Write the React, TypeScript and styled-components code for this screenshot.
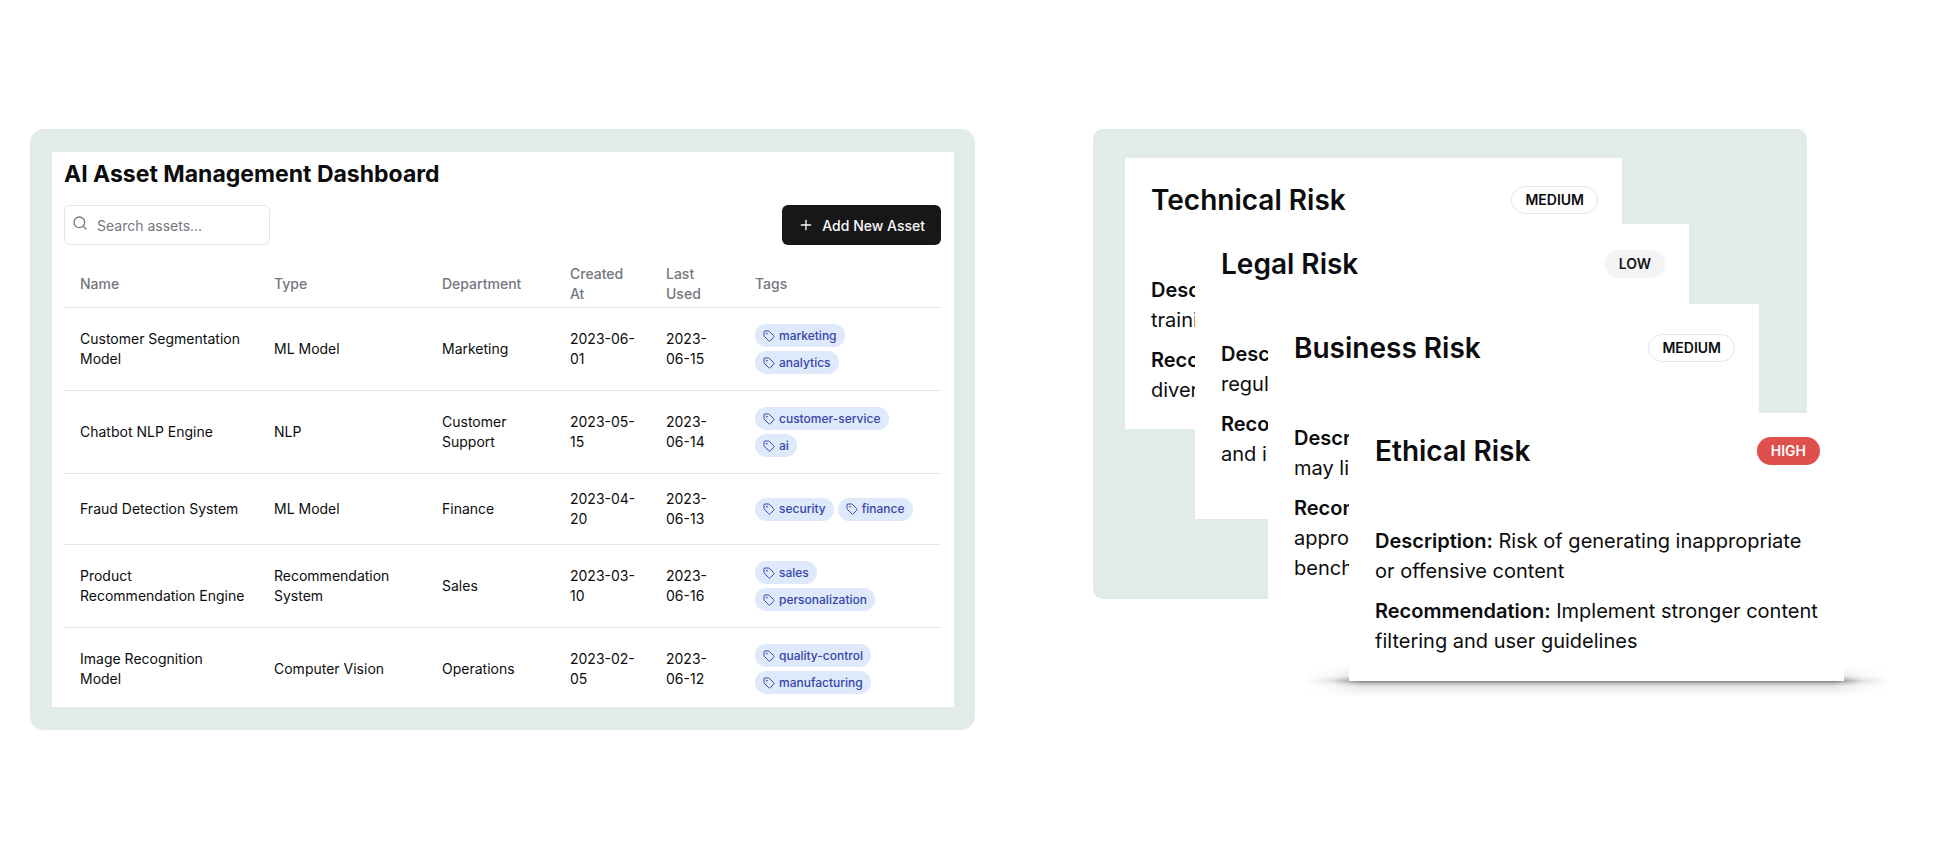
import React from "react";
import styled, { createGlobalStyle, css } from "styled-components";
import { Plus, Search, Tag as TagIcon } from "lucide-react";

const GlobalStyle = createGlobalStyle`
  *, *::before, *::after { box-sizing: border-box; }
  body {
    margin: 0;
    background: #fff;
    color: #0c0c0e;
    font-family: Inter, "Liberation Sans", sans-serif;
    overflow-x: hidden;
  }
`;

const Page = styled.main`
  display: grid;
  grid-template-columns: minmax(0, 945fr) minmax(0, 714fr);
  align-items: start;
  column-gap: 118px;
  padding: 129px 143px 129px 30px;
`;

const Panel = styled.section`
  background: #e1ebe7;
  border-radius: 14px;
  padding: 23px 21px 23px 22px;
`;

const Dashboard = styled.div`
  background: #fff;
  padding: 6px 13px 0 12px;
`;

const DashboardTitle = styled.h1`
  margin: 0 0 15px;
  font-size: 23px;
  line-height: 32px;
  font-weight: 700;
`;

const Toolbar = styled.div`
  display: flex;
  align-items: center;
  justify-content: space-between;
  margin-bottom: 15px;
`;

const SearchField = styled.label`
  position: relative;
  display: block;
  width: 206px;

  svg {
    position: absolute;
    left: 8px;
    top: 10px;
    color: #76767e;
  }
`;

const SearchInput = styled.input`
  display: block;
  width: 100%;
  height: 40px;
  padding: 0 12px 0 32px;
  border: 1px solid #e6e6e9;
  border-radius: 6px;
  background: transparent;
  font: inherit;
  font-size: 14px;

  &::placeholder {
    color: #76767e;
    opacity: 1;
  }
`;

const AddButton = styled.button`
  display: flex;
  align-items: center;
  gap: 8px;
  height: 40px;
  padding: 0 16px;
  border: 0;
  border-radius: 6px;
  background: #17171a;
  color: #fafafa;
  font: inherit;
  font-size: 14px;
  font-weight: 500;
`;

const AssetTable = styled.table`
  width: 100%;
  table-layout: fixed;
  border-collapse: separate;
  border-spacing: 0;
  font-size: 14px;
  line-height: 20px;
  text-align: left;
`;

const HeadCell = styled.th`
  height: 48px;
  padding: 0 12px 0 16px;
  border-bottom: 1px solid #e6e6e8;
  color: #76767e;
  font-weight: 500;
`;

const Row = styled.tr`
  &:last-child td {
    border-bottom: 0;
    padding-bottom: 12px;
  }
`;

const Cell = styled.td`
  padding: 15px 12px 15px 16px;
  border-bottom: 1px solid #e6e6e8;
`;

const TagList = styled.div`
  display: flex;
  flex-wrap: wrap;
  gap: 4px;
  padding: 1px 0;
`;

const Tag = styled.span`
  display: inline-flex;
  align-items: center;
  gap: 4px;
  height: 23px;
  padding: 0 8px;
  border-radius: 12px;
  background: #dfe9fc;
  color: #3646a8;
  font-size: 12px;
  font-weight: 500;
`;

const RiskPanel = styled.section`
  position: relative;
  min-height: 470px;
  border-radius: 10px;
  background: #e1ebe7;
`;

const RiskSheet = styled.article<{ $left: number; $right: number; $top: number; $height: number; $inset: number }>`
  position: absolute;
  left: ${(p) => p.$left}px;
  right: ${(p) => p.$right}px;
  top: ${(p) => p.$top}px;
  min-height: ${(p) => p.$height}px;
  padding: ${(p) => p.$inset}px 24px 24px 26px;
  background: #fff;
`;

const SheetShadow = styled.div`
  position: absolute;
  left: 212px;
  right: -83px;
  top: 536px;
  height: 32px;
  background: linear-gradient(
    rgba(0, 0, 0, 0),
    rgba(0, 0, 0, 0.1) 34%,
    rgba(0, 0, 0, 0.5) 50%,
    rgba(0, 0, 0, 0.28) 57%,
    rgba(0, 0, 0, 0.1) 66%,
    rgba(0, 0, 0, 0)
  );
  mask-image: linear-gradient(
    90deg,
    transparent,
    rgba(0, 0, 0, 0.25) 28px,
    #000 56px,
    #000 calc(100% - 56px),
    rgba(0, 0, 0, 0.25) calc(100% - 28px),
    transparent
  );
`;

const RiskHeader = styled.header`
  display: flex;
  align-items: center;
  justify-content: space-between;
  margin-bottom: 57px;
`;

const RiskTitle = styled.h2`
  margin: 0;
  font-size: 28px;
  line-height: 36px;
  font-weight: 600;
`;

const levelStyles = {
  MEDIUM: css`
    border-color: #e6e6e8;
    color: #0c0c0e;
  `,
  LOW: css`
    background: #f4f4f5;
    color: #17171a;
  `,
  HIGH: css`
    background: #df504c;
    color: #fafafa;
  `,
};

type Level = keyof typeof levelStyles;

const Badge = styled.span<{ $level: Level }>`
  padding: 3px 13px;
  border: 1px solid transparent;
  border-radius: 14px;
  font-size: 14px;
  line-height: 20px;
  font-weight: 600;
  ${(p) => levelStyles[p.$level]}
`;

const RiskText = styled.p`
  margin: 0 0 10px;
  font-size: 20px;
  line-height: 30px;
  white-space: pre-line;

  &:last-child { margin-bottom: 0; }

  strong { font-weight: 600; }
`;

const columns = [
  { label: "Name", width: 194 },
  { label: "Type", width: 168 },
  { label: "Department", width: 128 },
  { label: "Created At", width: 96 },
  { label: "Last Used", width: 89 },
  { label: "Tags", width: 202 },
];

const assets = [
  { name: "Customer Segmentation Model", type: "ML Model", department: "Marketing", created: "2023-06-01", used: "2023-06-15", tags: ["marketing", "analytics"] },
  { name: "Chatbot NLP Engine", type: "NLP", department: "Customer Support", created: "2023-05-15", used: "2023-06-14", tags: ["customer-service", "ai"] },
  { name: "Fraud Detection System", type: "ML Model", department: "Finance", created: "2023-04-20", used: "2023-06-13", tags: ["security", "finance"] },
  { name: "Product Recommendation Engine", type: "Recommendation System", department: "Sales", created: "2023-03-10", used: "2023-06-16", tags: ["sales", "personalization"] },
  { name: "Image Recognition Model", type: "Computer Vision", department: "Operations", created: "2023-02-05", used: "2023-06-12", tags: ["quality-control", "manufacturing"] },
];

const risks: {
  title: string;
  level: Level;
  left: number;
  right: number;
  top: number;
  height: number;
  inset: number;
  description: string;
  recommendation: string;
}[] = [
  {
    title: "Technical Risk", level: "MEDIUM", left: 32, right: 185, top: 29, height: 270, inset: 24,
    description: "\ntraining",
    recommendation: "\ndiverse",
  },
  {
    title: "Legal Risk", level: "LOW", left: 102, right: 118, top: 95, height: 295, inset: 22,
    description: "\nregulation",
    recommendation: "\nand in",
  },
  {
    title: "Business Risk", level: "MEDIUM", left: 175, right: 48, top: 175, height: 296, inset: 26,
    description: "\nmay limit",
    recommendation: "\napproach\nbenchmark",
  },
  {
    title: "Ethical Risk", level: "HIGH", left: 256, right: -37, top: 284, height: 268, inset: 20,
    description: "Risk of generating inappropriate or offensive content",
    recommendation: "Implement stronger content filtering and user guidelines",
  },
];

export default function App() {
  return (
    <>
      <GlobalStyle />
      <Page>
        <Panel>
          <Dashboard>
            <DashboardTitle>AI Asset Management Dashboard</DashboardTitle>
            <Toolbar>
              <SearchField>
                <Search size={16} aria-hidden />
                <SearchInput type="text" placeholder="Search assets..." aria-label="Search assets" />
              </SearchField>
              <AddButton type="button">
                <Plus size={16} aria-hidden />
                Add New Asset
              </AddButton>
            </Toolbar>
            <AssetTable>
              <colgroup>
                {columns.map((c) => (
                  <col key={c.label} width={c.width} />
                ))}
              </colgroup>
              <thead>
                <tr>
                  {columns.map((c) => (
                    <HeadCell key={c.label} scope="col">{c.label}</HeadCell>
                  ))}
                </tr>
              </thead>
              <tbody>
                {assets.map((a) => (
                  <Row key={a.name}>
                    <Cell>{a.name}</Cell>
                    <Cell>{a.type}</Cell>
                    <Cell>{a.department}</Cell>
                    <Cell>{a.created}</Cell>
                    <Cell>{a.used}</Cell>
                    <Cell>
                      <TagList>
                        {a.tags.map((t) => (
                          <Tag key={t}>
                            <TagIcon size={12} aria-hidden />
                            {t}
                          </Tag>
                        ))}
                      </TagList>
                    </Cell>
                  </Row>
                ))}
              </tbody>
            </AssetTable>
          </Dashboard>
        </Panel>
        <RiskPanel>
          <SheetShadow />
          {risks.map((r) => (
            <RiskSheet key={r.title} $left={r.left} $right={r.right} $top={r.top} $height={r.height} $inset={r.inset}>
              <RiskHeader>
                <RiskTitle>{r.title}</RiskTitle>
                <Badge $level={r.level}>{r.level}</Badge>
              </RiskHeader>
              <RiskText><strong>Description:</strong> {r.description}</RiskText>
              <RiskText><strong>Recommendation:</strong> {r.recommendation}</RiskText>
            </RiskSheet>
          ))}
        </RiskPanel>
      </Page>
    </>
  );
}
